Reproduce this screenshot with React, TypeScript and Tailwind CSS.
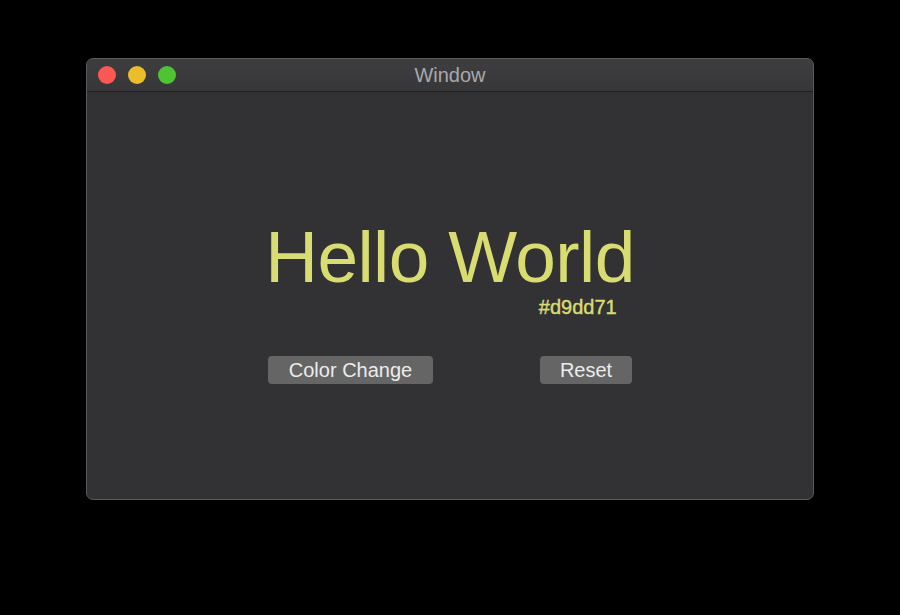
import React from 'react';

const Light = ({ color }: { color: string }) => (
    <span className={`block w-[18px] h-[18px] rounded-full ${color}`} />
);

const App: React.FC = () => {
    return (
        <div className="w-[900px] h-[615px] bg-black pt-[58px] pl-[86px] font-['Liberation_Sans',Arial,sans-serif]">
            <div className="w-[728px] h-[442px] rounded-[7px] border border-[#5a5a5c] bg-[#323234] overflow-hidden flex flex-col">
                <div className="relative h-[33px] shrink-0 bg-gradient-to-b from-[#3e3e41] to-[#37373a] border-b border-[#1f1f21] flex items-center justify-center">
                    <div className="absolute left-[11px] top-[7px] flex gap-[12px]">
                        <Light color="bg-[#fc5753]" />
                        <Light color="bg-[#eabd2c]" />
                        <Light color="bg-[#4fc432]" />
                    </div>
                    <span className="text-[20px] text-[#a9a9ab] leading-none">Window</span>
                </div>
                <div className="flex flex-col items-center pt-[132px]">
                    <div className="flex flex-col items-end">
                        <h1 className="text-[73px] leading-[66px] text-[#d9dd71] tracking-[-0.6px]">Hello World</h1>
                        <p className="mt-[7px] mr-[18px] text-[20px] leading-[20px] text-[#d9dd71] [-webkit-text-stroke:0.4px_#d9dd71]">#d9dd71</p>
                    </div>
                    <div className="mt-[39px] w-[364px] flex justify-between">
                        <button className="w-[165px] h-[28px] rounded-[4px] bg-[#656565] text-[20px] text-[#ececec] leading-none">Color Change</button>
                        <button className="w-[92px] h-[28px] rounded-[4px] bg-[#656565] text-[20px] text-[#ececec] leading-none">Reset</button>
                    </div>
                </div>
            </div>
        </div>
    );
};

export default App;
